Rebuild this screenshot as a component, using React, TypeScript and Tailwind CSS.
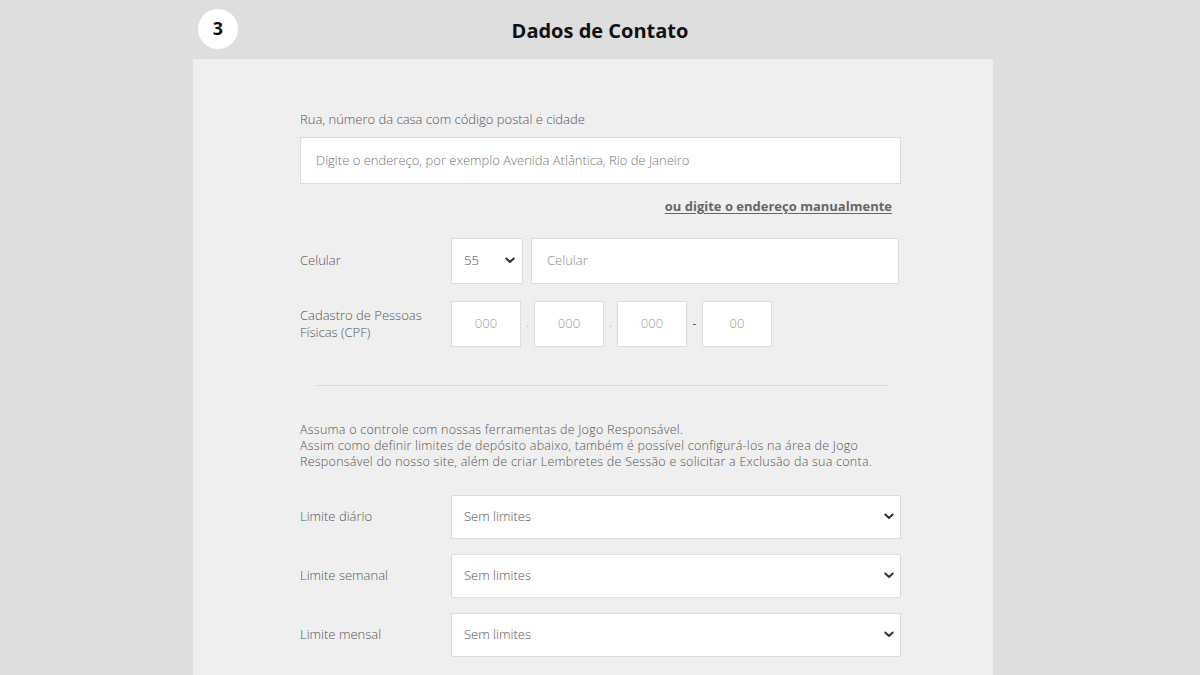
import React from 'react'

// ── Small pieces ───────────────────────────────────────────────────────────────

function Chevron() {
  return (
    <svg width="10" height="7" viewBox="0 0 10 7" fill="none" className="shrink-0">
      <path d="M1.3 1.5l3.7 3.5 3.7-3.5" stroke="#333" strokeWidth="2" strokeLinecap="round" strokeLinejoin="round" />
    </svg>
  )
}

const boxCls = 'bg-white border border-[#dcdcdc] flex items-center'
const labelCls = 'text-[13px] font-light text-[#555] leading-[17px]'

function LimitRow({ label }: { label: string }) {
  return (
    <div className="flex items-center">
      <div className={`${labelCls} w-[151px] shrink-0`}>{label}</div>
      <div className={`${boxCls} flex-1 h-[44px] pl-[12px] pr-[6px] justify-between`}>
        <span className="text-[13px] font-light text-[#555]">Sem limites</span>
        <Chevron />
      </div>
    </div>
  )
}

function CpfBox({ text }: { text: string }) {
  return (
    <div className={`${boxCls} w-[70px] h-[46px] justify-center text-[13px] font-light text-[#999]`}>
      {text}
    </div>
  )
}

// ── App ───────────────────────────────────────────────────────────────────────

export default function App() {
  return (
    <div
      className="w-[1200px] h-[675px] overflow-hidden bg-[#dedede] flex flex-col pl-[193px]"
      style={{ fontFamily: '"Open Sans", "Liberation Sans", sans-serif' }}
    >
      {/* Header */}
      <div className="w-[800px] h-[59px] flex items-center relative">
        <div className="ml-[5px] mb-[2px] w-[40px] h-[40px] rounded-full bg-white flex items-center justify-center text-[18px] font-bold text-[#111]">
          3
        </div>
        <h2 className="absolute left-0 right-0 top-[18px] pl-[14px] text-center text-[20px] leading-[26px] font-bold text-[#111] pointer-events-none">
          Dados de Contato
        </h2>
      </div>

      {/* Card */}
      <div className="w-[800px] flex-1 bg-[#efefef] pl-[107px] pr-[92px] pt-[52px]">
        <div className={`${labelCls} mb-[9px]`}>Rua, número da casa com código postal e cidade</div>
        <div className={`${boxCls} h-[47px] pl-[15px] text-[13px] font-light text-[#777]`}>
          Digite o endereço, por exemplo Avenida Atlântica, Rio de Janeiro
        </div>
        <div className="flex justify-end pr-[9px] mt-[13px]">
          <a className="text-[13px] font-bold text-[#666] underline underline-offset-2">
            ou digite o endereço manualmente
          </a>
        </div>

        {/* Celular */}
        <div className="flex items-center mt-[21px]">
          <div className={`${labelCls} w-[151px] shrink-0`}>Celular</div>
          <div className={`${boxCls} w-[72px] h-[46px] pl-[12px] pr-[7px] justify-between`}>
            <span className="text-[13px] font-light text-[#444]">55</span>
            <Chevron />
          </div>
          <div className={`${boxCls} ml-[8px] flex-1 mr-[2px] h-[46px] pl-[15px] text-[13px] font-light text-[#888]`}>
            Celular
          </div>
        </div>

        {/* CPF */}
        <div className="flex items-center mt-[17px]">
          <div className={`${labelCls} w-[151px] shrink-0`}>
            Cadastro de Pessoas
            <br />
            Físicas (CPF)
          </div>
          <CpfBox text="000" />
          <span className="w-[13px] text-center text-[11px] text-[#bbb]">.</span>
          <CpfBox text="000" />
          <span className="w-[13px] text-center text-[11px] text-[#bbb]">.</span>
          <CpfBox text="000" />
          <span className="w-[15px] text-center text-[12px] text-[#555]">-</span>
          <CpfBox text="00" />
        </div>

        <div className="ml-[16px] mr-[13px] mt-[38px] border-t border-[#dcdcdc]" />

        <p className="mt-[36px] text-[12.5px] font-light text-[#555] leading-[16px] tracking-[0.25px]">
          Assuma o controle com nossas ferramentas de Jogo Responsável.
          <br />
          Assim como definir limites de depósito abaixo, também é possível configurá-los na área de Jogo
          <br />
          Responsável do nosso site, além de criar Lembretes de Sessão e solicitar a Exclusão da sua conta.
        </p>

        <div className="mt-[25px] flex flex-col gap-[15px]">
          <LimitRow label="Limite diário" />
          <LimitRow label="Limite semanal" />
          <LimitRow label="Limite mensal" />
        </div>
      </div>
    </div>
  )
}
